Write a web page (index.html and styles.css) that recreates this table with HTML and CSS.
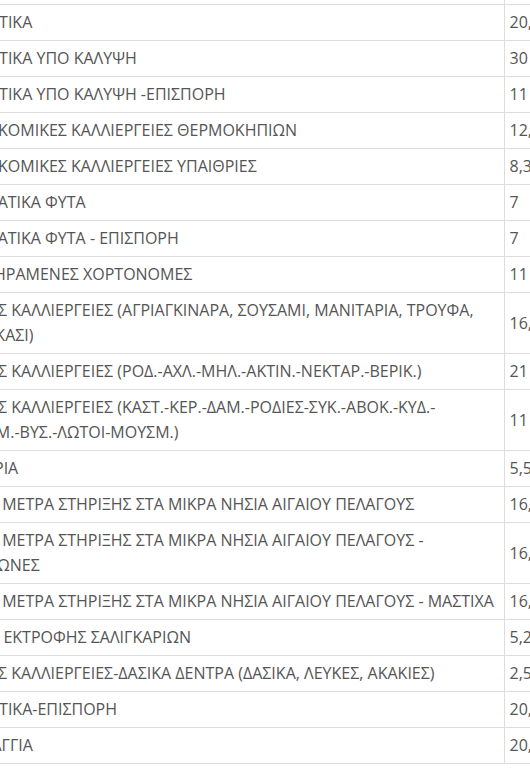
FILE: index.html
```html
<!DOCTYPE html>
<html lang="el">
<head>
<meta charset="utf-8">
<link rel="stylesheet" href="styles.css">
</head>
<body>
<table class="rates">
  <colgroup><col class="c-name"><col class="c-val"></colgroup>
  <tbody>
    <tr><td class="kp">ΚΗΠΕΥΤΙΚΑ ΥΠΑΙΘΡΙΑ</td><td>16,00</td></tr>
    <tr><td class="kp">ΚΗΠΕΥΤΙΚΑ</td><td>20,00</td></tr>
    <tr><td class="kp">ΚΗΠΕΥΤΙΚΑ ΥΠΟ ΚΑΛΥΨΗ</td><td>30</td></tr>
    <tr><td class="kp">ΚΗΠΕΥΤΙΚΑ ΥΠΟ ΚΑΛΥΨΗ -ΕΠΙΣΠΟΡΗ</td><td>11</td></tr>
    <tr><td>ΑΝΘΟΚΟΜΙΚΕΣ ΚΑΛΛΙΕΡΓΕΙΕΣ ΘΕΡΜΟΚΗΠΙΩΝ</td><td>12,00</td></tr>
    <tr><td>ΑΝΘΟΚΟΜΙΚΕΣ ΚΑΛΛΙΕΡΓΕΙΕΣ ΥΠΑΙΘΡΙΕΣ</td><td>8,30</td></tr>
    <tr><td>ΑΡΩΜΑΤΙΚΑ ΦΥΤΑ</td><td>7</td></tr>
    <tr><td>ΑΡΩΜΑΤΙΚΑ ΦΥΤΑ - ΕΠΙΣΠΟΡΗ</td><td>7</td></tr>
    <tr><td>ΑΠΟΞΗΡΑΜΕΝΕΣ ΧΟΡΤΟΝΟΜΕΣ</td><td>11</td></tr>
    <tr><td>ΛΟΙΠΕΣ ΚΑΛΛΙΕΡΓΕΙΕΣ (ΑΓΡΙΑΓΚΙΝΑΡΑ, ΣΟΥΣΑΜΙ, ΜΑΝΙΤΑΡΙΑ, ΤΡΟΥΦΑ, ΚΟΛΟΚΑΣΙ)</td><td>16,00</td></tr>
    <tr><td>ΛΟΙΠΕΣ ΚΑΛΛΙΕΡΓΕΙΕΣ (ΡΟΔ.-ΑΧΛ.-ΜΗΛ.-ΑΚΤΙΝ.-ΝΕΚΤΑΡ.-ΒΕΡΙΚ.)</td><td>21</td></tr>
    <tr><td>ΛΟΙΠΕΣ ΚΑΛΛΙΕΡΓΕΙΕΣ (ΚΑΣΤ.-ΚΕΡ.-ΔΑΜ.-ΡΟΔΙΕΣ-ΣΥΚ.-ΑΒΟΚ.-ΚΥΔ.-<br>ΜΟΥΣΜ.-ΒΥΣ.-ΛΩΤΟΙ-ΜΟΥΣΜ.)</td><td>11</td></tr>
    <tr><td>ΦΥΤΩΡΙΑ</td><td>5,50</td></tr>
    <tr><td>ΕΙΔΙΚΑ ΜΕΤΡΑ ΣΤΗΡΙΞΗΣ ΣΤΑ ΜΙΚΡΑ ΝΗΣΙΑ ΑΙΓΑΙΟΥ ΠΕΛΑΓΟΥΣ</td><td>16,00</td></tr>
    <tr><td>ΕΙΔΙΚΑ ΜΕΤΡΑ ΣΤΗΡΙΞΗΣ ΣΤΑ ΜΙΚΡΑ ΝΗΣΙΑ ΑΙΓΑΙΟΥ ΠΕΛΑΓΟΥΣ - ΟΠΩΡΩΝΕΣ</td><td>16,00</td></tr>
    <tr><td>ΕΙΔΙΚΑ ΜΕΤΡΑ ΣΤΗΡΙΞΗΣ ΣΤΑ ΜΙΚΡΑ ΝΗΣΙΑ ΑΙΓΑΙΟΥ ΠΕΛΑΓΟΥΣ - ΜΑΣΤΙΧΑ</td><td>16,00</td></tr>
    <tr><td>ΧΩΡΟΙ ΕΚΤΡΟΦΗΣ ΣΑΛΙΓΚΑΡΙΩΝ</td><td>5,20</td></tr>
    <tr><td>ΛΟΙΠΕΣ ΚΑΛΛΙΕΡΓΕΙΕΣ-ΔΑΣΙΚΑ ΔΕΝΤΡΑ (ΔΑΣΙΚΑ, ΛΕΥΚΕΣ, ΑΚΑΚΙΕΣ)</td><td>2,50</td></tr>
    <tr><td class="kp">ΚΗΠΕΥΤΙΚΑ-ΕΠΙΣΠΟΡΗ</td><td>20,00</td></tr>
    <tr><td>ΣΠΑΡΑΓΓΙΑ</td><td>20,00</td></tr>
  </tbody>
</table>
</body>
</html>
```
FILE: styles.css
```css
html, body {
  margin: 0;
  padding: 0;
  overflow: hidden;
  background: #fff;
}
.rates {
  border-collapse: collapse;
  table-layout: fixed;
  width: 645px;
  margin-left: -54px;
  margin-top: -32px;
  font-family: "Open Sans", "Liberation Sans", sans-serif;
  font-size: 16px;
  line-height: 25px;
  color: #555;
}
.c-name { width: 558px; }
.c-val { width: 87px; }
.rates td {
  padding: 5px;
  border-top: 1px solid #ddd;
  border-bottom: 1px solid #ddd;
  vertical-align: middle;
  text-align: left;
}
.rates td + td {
  border-left: 1px solid #ddd;
}
.rates td.kp {
  text-indent: -3px;
}
```
